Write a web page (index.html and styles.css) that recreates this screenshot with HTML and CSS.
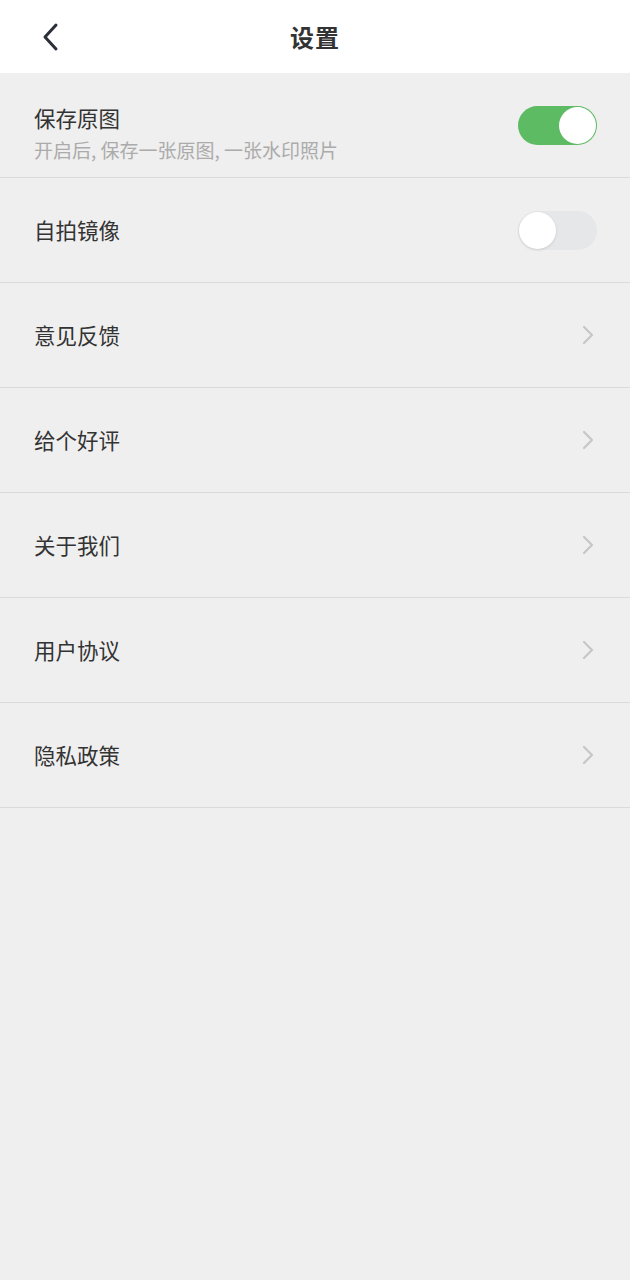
FILE: index.html
```html
<!DOCTYPE html>
<html lang="zh">
<head>
<meta charset="utf-8">
<title>设置</title>
<link rel="stylesheet" href="styles.css">
</head>
<body>
<header class="topbar">
  <span class="back">
    <svg width="20" height="30" viewBox="0 0 20 30"><path d="M15 3 L4 15 L15 27" fill="none" stroke="#2b2f3a" stroke-width="3" stroke-linecap="round" stroke-linejoin="round"/></svg>
  </span>
  <h1 class="title">设置</h1>
</header>
<main class="list">
  <div class="row">
    <div class="label first">
      <div class="main">保存原图</div>
      <div class="sub">开启后, 保存一张原图, 一张水印照片</div>
    </div>
    <span class="switch on"><span class="knob"></span></span>
  </div>
  <div class="row">
    <div class="label"><div class="main">自拍镜像</div></div>
    <span class="switch"><span class="knob"></span></span>
  </div>
  <div class="row"><div class="label"><div class="main">意见反馈</div></div><span class="chev"><svg width="12" height="20" viewBox="0 0 12 20"><path d="M2 2 L10 10 L2 18" fill="none" stroke="#c6c6c6" stroke-width="2.2" stroke-linecap="round" stroke-linejoin="round"/></svg></span></div>
  <div class="row"><div class="label"><div class="main">给个好评</div></div><span class="chev"><svg width="12" height="20" viewBox="0 0 12 20"><path d="M2 2 L10 10 L2 18" fill="none" stroke="#c6c6c6" stroke-width="2.2" stroke-linecap="round" stroke-linejoin="round"/></svg></span></div>
  <div class="row"><div class="label"><div class="main">关于我们</div></div><span class="chev"><svg width="12" height="20" viewBox="0 0 12 20"><path d="M2 2 L10 10 L2 18" fill="none" stroke="#c6c6c6" stroke-width="2.2" stroke-linecap="round" stroke-linejoin="round"/></svg></span></div>
  <div class="row"><div class="label"><div class="main">用户协议</div></div><span class="chev"><svg width="12" height="20" viewBox="0 0 12 20"><path d="M2 2 L10 10 L2 18" fill="none" stroke="#c6c6c6" stroke-width="2.2" stroke-linecap="round" stroke-linejoin="round"/></svg></span></div>
  <div class="row"><div class="label"><div class="main">隐私政策</div></div><span class="chev"><svg width="12" height="20" viewBox="0 0 12 20"><path d="M2 2 L10 10 L2 18" fill="none" stroke="#c6c6c6" stroke-width="2.2" stroke-linecap="round" stroke-linejoin="round"/></svg></span></div>
</main>
</body>
</html>
```
FILE: styles.css
```css
html, body {
  margin: 0;
  padding: 0;
  background: #efefef;
  font-family: "Noto Sans CJK SC", "Noto Sans", sans-serif;
  color: #333;
}
.topbar {
  height: 73px;
  background: #fff;
  display: flex;
  align-items: center;
  justify-content: center;
  position: relative;
}
.back {
  position: absolute;
  left: 41px;
  top: 22px;
  display: flex;
}
.title {
  margin: 0;
  font-size: 24px;
  font-weight: 700;
  color: #333;
  letter-spacing: 1px;
}
.row {
  height: 104px;
  border-bottom: 1px solid #dadada;
  display: flex;
  align-items: center;
  justify-content: space-between;
  padding: 0 33px 0 34px;
}
.label .main {
  font-size: 21.5px;
  line-height: 28px;
  color: #333;
}
.label.first {
  padding-top: 16px;
}
.label .sub {
  font-size: 19px;
  line-height: 26px;
  color: #ababab;
  margin-top: 5px;
}
.switch {
  width: 79px;
  height: 39px;
  border-radius: 20px;
  background: #e6e7e9;
  position: relative;
  box-sizing: border-box;
  flex: none;
}
.switch .knob {
  position: absolute;
  top: 1px;
  left: 1px;
  width: 37px;
  height: 37px;
  border-radius: 50%;
  background: #fff;
  box-shadow: 0 1px 3px rgba(0,0,0,0.12);
}
.switch.on {
  background: #5dbb63;
}
.switch.on .knob {
  left: auto;
  right: 1px;
  box-shadow: none;
}
.chev {
  display: flex;
  margin-right: 3px;
}
```
